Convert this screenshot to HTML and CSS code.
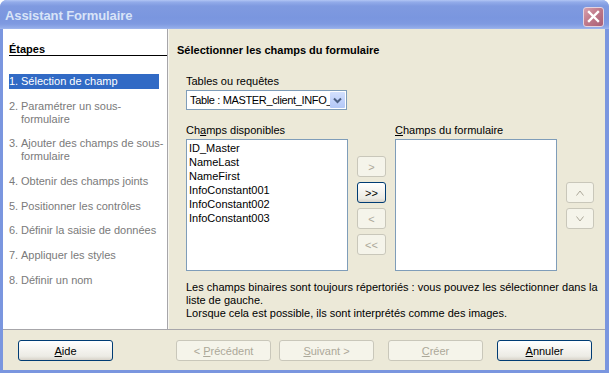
FILE: index.html
```
<!DOCTYPE html>
<html lang="fr">
<head>
<meta charset="utf-8">
<title>Assistant Formulaire</title>
<link rel="stylesheet" href="styles.css">
</head>
<body>
<div class="window">
  <div class="titlebar">
    <span class="title">Assistant Formulaire</span>
    <div class="close">
      <svg width="13" height="13" viewBox="0 0 13 13"><path d="M2 2 L11 11 M11 2 L2 11" stroke="#fff" stroke-width="2.4" stroke-linecap="square"/></svg>
    </div>
  </div>
  <div class="client">
    <div class="main">
      <div class="steps-panel">
        <div class="steps-head">Étapes</div>
        <ol class="steps">
          <li class="step sel"><span class="num">1.</span><span class="txt">Sélection de champ</span></li>
          <li class="step"><span class="num">2.</span><span class="txt">Paramétrer un sous-formulaire</span></li>
          <li class="step"><span class="num">3.</span><span class="txt">Ajouter des champs de sous-formulaire</span></li>
          <li class="step"><span class="num">4.</span><span class="txt">Obtenir des champs joints</span></li>
          <li class="step"><span class="num">5.</span><span class="txt">Positionner les contrôles</span></li>
          <li class="step"><span class="num">6.</span><span class="txt">Définir la saisie de données</span></li>
          <li class="step"><span class="num">7.</span><span class="txt">Appliquer les styles</span></li>
          <li class="step"><span class="num">8.</span><span class="txt">Définir un nom</span></li>
        </ol>
      </div>
      <div class="page">
        <h1 class="page-title">Sélectionner les champs du formulaire</h1>
        <div class="form">
          <div class="label tables">Tables ou requêtes</div>
          <div class="combo">
            <span class="combo-text">Table : MASTER_client_INFO_</span>
            <span class="combo-btn"><svg width="15" height="16" viewBox="0 0 15 16"><path d="M4 6.5 L7.5 10 L11 6.5" fill="none" stroke="#4d6185" stroke-width="2"/></svg></span>
          </div>
          <div class="fields">
            <div class="label">Ch<u>a</u>mps disponibles</div>
            <div></div>
            <div class="label"><u>C</u>hamps du formulaire</div>
            <div></div>
            <ul class="list">
              <li>ID_Master</li>
              <li>NameLast</li>
              <li>NameFirst</li>
              <li>InfoConstant001</li>
              <li>InfoConstant002</li>
              <li>InfoConstant003</li>
            </ul>
            <div class="movebtns">
              <div class="btn small disabled">&gt;</div>
              <div class="btn small">&gt;&gt;</div>
              <div class="btn small disabled">&lt;</div>
              <div class="btn small disabled">&lt;&lt;</div>
            </div>
            <ul class="list"></ul>
            <div class="orderbtns">
              <div class="btn tiny disabled"><svg width="8" height="6" viewBox="0 0 8 6"><path d="M0.5 5.5 L4 1 L7.5 5.5" fill="none" stroke="#aca899" stroke-width="1"/></svg></div>
              <div class="btn tiny disabled"><svg width="8" height="6" viewBox="0 0 8 6"><path d="M0.5 0.5 L4 5 L7.5 0.5" fill="none" stroke="#aca899" stroke-width="1"/></svg></div>
            </div>
          </div>
          <p class="desc">Les champs binaires sont toujours répertoriés : vous pouvez les sélectionner dans la<br>liste de gauche.<br>Lorsque cela est possible, ils sont interprétés comme des images.</p>
        </div>
      </div>
    </div>
    <div class="footer">
      <div class="btn wide"><span><u>A</u>ide</span></div>
      <div class="btn wide disabled prev"><span>&lt; <u>P</u>récédent</span></div>
      <div class="btn wide disabled next"><span><u>S</u>uivant &gt;</span></div>
      <div class="btn wide disabled create"><span><u>C</u>réer</span></div>
      <div class="btn wide cancel"><span><u>A</u>nnuler</span></div>
    </div>
  </div>
</div>
</body>
</html>
```
FILE: styles.css
```
html, body {
  margin: 0;
  padding: 0;
  background: #ffffff;
}
body {
  font-family: "Liberation Sans", Arial, sans-serif;
  font-size: 11px;
  color: #000;
}
.window {
  width: 609px;
  height: 373px;
  display: flex;
  flex-direction: column;
  background: #7a96df;
  border-radius: 7px 7px 0 0;
  overflow: hidden;
}
.titlebar {
  height: 29px;
  flex: none;
  display: flex;
  align-items: center;
  justify-content: space-between;
  padding: 0 5px 0 5px;
  background: linear-gradient(180deg, #b2c6f4 0px, #93acea 2px, #7f9ae0 6px, #7a96df 18px, #7f9ae1 24px, #93ace9 28px, #a3b9ee 29px);
}
.title {
  font-weight: bold;
  font-size: 13px;
  color: #d8e4f8;
  margin-top: 2px;
  letter-spacing: -0.1px;
}
.close {
  width: 21px;
  height: 20px;
  box-sizing: border-box;
  border: 1px solid #e4d3df;
  border-radius: 3px;
  background: linear-gradient(135deg, #d9a1ad 0%, #c07a8b 45%, #a95f76 100%);
  display: flex;
  align-items: center;
  justify-content: center;
  margin-top: 4px;
}
.close svg { display: block; }
.client {
  flex: 1;
  margin: 0 4px 3px 3px;
  display: flex;
  flex-direction: column;
  background: #ece9d8;
}
.main {
  height: 300px;
  flex: none;
  display: flex;
  border-bottom: 1px solid #a7a6aa;
}
.steps-panel {
  width: 165px;
  box-sizing: border-box;
  background: #fff;
  border-right: 1px solid #a7a6aa;
  padding-left: 6px;
}
.steps-head {
  margin-top: 14px;
  font-weight: bold;
  line-height: 12px;
  border-bottom: 1px solid #000;
}
.steps {
  list-style: none;
  margin: 18px 0 0 0;
  padding: 0;
  width: 156px;
  display: flex;
  flex-direction: column;
  gap: 9.7px;
  color: #7a7a7a;
}
.step {
  display: flex;
  line-height: 13px;
  padding: 1px 0;
}
.step.sel {
  width: 150px;
  background: #316ac5;
  color: #fff;
}
.num {
  width: 12px;
  flex: none;
}
.txt {
  flex: 1;
  min-width: 0;
}
.page {
  flex: 1;
  padding-left: 8px;
  border-left: 1px solid #f7f6f0;
}
.page-title {
  margin: 15px 0 0 0;
  font-size: 11px;
  font-weight: bold;
  line-height: 13px;
}
.form {
  padding-left: 9px;
}
.label {
  line-height: 13px;
  white-space: nowrap;
}
.tables {
  margin-top: 18px;
}
.combo {
  margin-top: 2px;
  width: 161px;
  height: 20px;
  box-sizing: border-box;
  border: 1px solid #7f9db9;
  background: #fff;
  display: flex;
  align-items: center;
  padding: 1px;
}
.combo-text {
  flex: 1;
  min-width: 0;
  white-space: nowrap;
  padding-left: 2px;
  line-height: 16px;
  letter-spacing: -0.35px;
}
.combo-btn {
  flex: none;
  width: 15px;
  height: 16px;
  background: linear-gradient(180deg, #d3e0fd 0%, #bfd1fa 60%, #b3c8f6 100%);
  border-radius: 1px;
}
.combo-btn svg { display: block; }
.fields {
  margin-top: 14px;
  display: grid;
  grid-template-columns: 162px 29px 162px 28px;
  grid-template-rows: 13px 132px;
  column-gap: 9px;
  row-gap: 2px;
}
.list {
  list-style: none;
  margin: 0;
  padding: 1px 0 0 1px;
  border: 1px solid #7f9db9;
  background: #fff;
}
.list li {
  line-height: 14px;
  padding-left: 1px;
  white-space: nowrap;
}
.movebtns {
  display: flex;
  flex-direction: column;
  gap: 5px;
  padding-top: 17px;
}
.orderbtns {
  display: flex;
  flex-direction: column;
  gap: 5px;
  padding-top: 43px;
}
.btn {
  height: 21px;
  box-sizing: border-box;
  border: 1px solid #003c74;
  border-radius: 3px;
  background: linear-gradient(180deg, #ffffff 0%, #f6f5f1 40%, #ecebe5 80%, #d8d3c9 100%);
  display: flex;
  align-items: center;
  justify-content: center;
  white-space: nowrap;
  color: #000;
}
.btn.disabled {
  border-color: #c9c7ba;
  background: #f5f4ea;
  color: #aca899;
}
.btn.small { width: 29px; }
.btn.tiny { width: 28px; }
.btn.wide { width: 95px; flex: none; }
.desc {
  margin: 10px 0 0 0;
  line-height: 13px;
  white-space: nowrap;
}
.footer {
  flex: 1;
  display: flex;
  align-items: flex-start;
  padding: 10px 13px 0 15px;
}
.prev { margin-left: 63px; }
.next { margin-left: 8px; }
.create { margin-left: 14px; }
.cancel { margin-left: 14px; }
```
